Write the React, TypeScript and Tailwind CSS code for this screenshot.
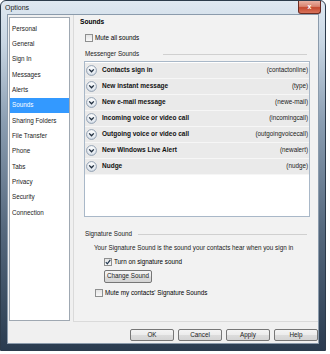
import React from 'react';

const categories = [
  'Personal',
  'General',
  'Sign In',
  'Messages',
  'Alerts',
  'Sounds',
  'Sharing Folders',
  'File Transfer',
  'Phone',
  'Tabs',
  'Privacy',
  'Security',
  'Connection',
];

const sounds = [
  { label: 'Contacts sign in', file: '(contactonline)' },
  { label: 'New instant message', file: '(type)' },
  { label: 'New e-mail message', file: '(newe-mail)' },
  { label: 'Incoming voice or video call', file: '(incomingcall)' },
  { label: 'Outgoing voice or video call', file: '(outgoingvoicecall)' },
  { label: 'New Windows Live Alert', file: '(newalert)' },
  { label: 'Nudge', file: '(nudge)' },
];

const ExpandIcon: React.FC = () => (
  <svg width="11" height="11" viewBox="0 0 11 11" className="shrink-0">
    <defs>
      <linearGradient id="chev" x1="0" y1="0" x2="0" y2="1">
        <stop offset="0" stopColor="#ffffff" />
        <stop offset="1" stopColor="#d9e1ea" />
      </linearGradient>
    </defs>
    <circle cx="5.5" cy="5.5" r="4.9" fill="url(#chev)" stroke="#8394a8" strokeWidth="0.9" />
    <path d="M3.2 4.4 L5.5 6.8 L7.8 4.4" fill="none" stroke="#1f2d3d" strokeWidth="1.3" />
  </svg>
);

const Checkbox: React.FC<{ checked?: boolean }> = ({ checked = false }) => (
  <div className="w-[8px] h-[8px] shrink-0 border border-[#8e8f8f] bg-[linear-gradient(to_bottom,#e4e4e4,#f8f8f8)] flex items-center justify-center">
    {checked && (
      <svg width="6" height="6" viewBox="0 0 6 6">
        <path d="M0.8 3.2 L2.3 4.8 L5.3 0.9" fill="none" stroke="#21374f" strokeWidth="1.2" />
      </svg>
    )}
  </div>
);

const Button: React.FC<{ label: string; className?: string }> = ({ label, className = '' }) => (
  <div
    className={`h-[12px] rounded-[2px] border border-[#767676] bg-[linear-gradient(to_bottom,#f4f4f4_0%,#ececec_48%,#dcdcdc_52%,#d4d4d4_100%)] flex items-center justify-center text-[#1a1a1a] ${className}`}
  >
    {label}
  </div>
);

export default function App() {
  return (
    <div className="w-[330px] h-[354px] bg-white text-[6.3px] leading-none text-black font-['Liberation_Sans',Arial,sans-serif]">
      <div className="w-[326px] h-[351px] rounded-t-[6px] border border-[#2c3b4b] bg-[linear-gradient(to_bottom,#dfe8f1_0%,#c8d6e3_12%,#8a9db1_35%,#56697e_65%,#2a3c50_100%)] flex flex-col">
        {/* Title bar */}
        <div className="h-[13px] flex items-center justify-between pl-[4px]">
          <span className="text-[7px] text-[#1c1c1c]">Options</span>
          <div className="-mt-px mr-[4px] w-[23px] h-[13px] rounded-b-[3px] border border-[#6b2b22] border-t-0 bg-[linear-gradient(to_bottom,#eab1a3_0%,#d98470_45%,#c6492f_55%,#d8735b_100%)] flex items-center justify-center">
            <span className="text-white text-[7px] font-bold">x</span>
          </div>
        </div>

        {/* Client area */}
        <div className="mx-[6px] mb-[6px] flex-1 border border-[#8b9bac] bg-[#f0f0f0] flex flex-col">
          <div className="h-[307px] flex">
            {/* Category list */}
            <div className="ml-px mt-[2px] w-[61px] h-[304px] border border-[#9fa8b2] bg-white pt-[3px]">
              {categories.map((c) => (
                <div
                  key={c}
                  className={`h-[15.35px] flex items-center pl-[2px] ${
                    c === 'Sounds' ? 'bg-[#3399ff] text-white' : 'text-[#1a1a1a]'
                  }`}
                >
                  {c}
                </div>
              ))}
            </div>

            {/* Sounds panel */}
            <div className="ml-[3px] flex-1 border-l border-b border-[#dadada] bg-[#f2f2f2] flex flex-col">
              <div className="h-[14px] flex items-center pl-[6px] font-bold text-[6.6px]">Sounds</div>

              <div className="mt-[2px] h-[14px] flex items-center pl-[11px] gap-[2px]">
                <Checkbox />
                <span>Mute all sounds</span>
              </div>

              <div className="mt-[2px] h-[14px] flex items-center pl-[11px] pr-[11px]">
                <span className="text-[#1a1a1a]">Messenger Sounds</span>
                <div className="ml-[24px] flex-1 h-px bg-[#d0d0d0]" />
              </div>

              {/* Sound list */}
              <div className="ml-[10px] w-[226px] h-[156px] border border-[#a9b8c8] bg-white pt-px">
                {sounds.map((s) => (
                  <div
                    key={s.label}
                    className="h-[16px] flex items-center pl-px pr-[1px] bg-[#eaeaea] border-b border-[#f6f6f6]"
                  >
                    <ExpandIcon />
                    <span className="ml-[5px] font-bold text-[6.5px] text-[#111]">{s.label}</span>
                    <span className="ml-auto text-[#1a1a1a]">{s.file}</span>
                  </div>
                ))}
              </div>

              <div className="mt-[10px] h-[14px] flex items-center pl-[11px] pr-[11px]">
                <span className="text-[#1a1a1a]">Signature Sound</span>
                <div className="ml-[6px] flex-1 h-px bg-[#d0d0d0]" />
              </div>

              <div className="h-[14px] flex items-center pl-[20px] text-[#1a1a1a]">
                Your Signature Sound is the sound your contacts hear when you sign in
              </div>

              <div className="h-[14px] flex items-center pl-[30px] gap-[2px]">
                <Checkbox checked />
                <span>Turn on signature sound</span>
              </div>

              <div className="mt-px ml-[30px]">
                <Button label="Change Sound" className="w-[48px] h-[13px]" />
              </div>

              <div className="mt-[3px] h-[14px] flex items-center pl-[21px] gap-[2px]">
                <Checkbox />
                <span>Mute my contacts&apos; Signature Sounds</span>
              </div>
            </div>
          </div>

          {/* Dialog buttons */}
          <div className="pt-[7px] flex justify-end gap-[4px]">
            <Button label="OK" className="w-[44px]" />
            <Button label="Cancel" className="w-[44px]" />
            <Button label="Apply" className="w-[44px]" />
            <Button label="Help" className="w-[44px]" />
          </div>
        </div>
      </div>
    </div>
  );
}
